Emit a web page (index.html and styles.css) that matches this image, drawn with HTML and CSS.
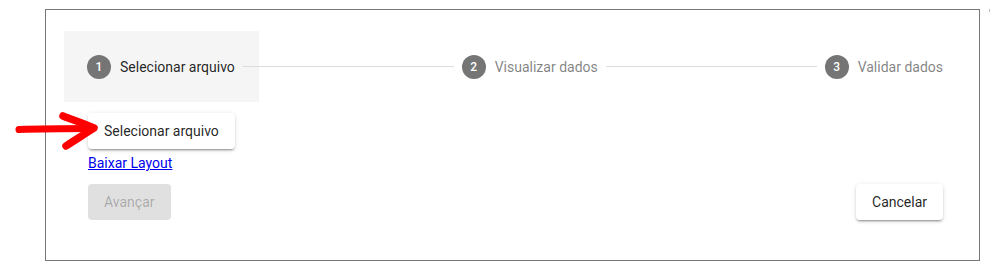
FILE: index.html
```html
<!DOCTYPE html>
<html lang="pt">
<head>
<meta charset="utf-8">
<title>Importar arquivo</title>
<link rel="stylesheet" href="styles.css">
</head>
<body>
<div class="page">
  <div class="panel">
    <div class="stepper">
      <div class="step step-active">
        <span class="step-icon">1</span>
        <span class="step-label">Selecionar arquivo</span>
      </div>
      <div class="connector connector-first"></div>
      <div class="step">
        <span class="step-icon">2</span>
        <span class="step-label">Visualizar dados</span>
      </div>
      <div class="connector"></div>
      <div class="step">
        <span class="step-icon">3</span>
        <span class="step-label">Validar dados</span>
      </div>
    </div>
    <div class="content">
      <div class="select-wrap">
        <button class="btn btn-raised">Selecionar arquivo</button>
        <svg class="arrow" width="90" height="46" viewBox="0 0 90 46">
          <path d="M4 22.5 C 30 21.5, 58 21.5, 78 21.5" stroke="#ff0000" stroke-width="7" fill="none" stroke-linecap="round"/>
          <path d="M48 9 C 58 13, 70 17, 79 21 C 70 27, 60 33, 51 39" stroke="#ff0000" stroke-width="7.5" fill="none" stroke-linecap="round" stroke-linejoin="round"/>
        </svg>
      </div>
      <a class="link" href="#">Baixar Layout</a>
      <div class="actions">
        <button class="btn btn-disabled" disabled>Avançar</button>
        <button class="btn btn-raised">Cancelar</button>
      </div>
    </div>
  </div>
  <span class="tick"></span>
</div>
</body>
</html>
```
FILE: styles.css
```css
html, body {
  margin: 0;
  padding: 0;
  background: #ffffff;
}
body {
  font-family: Roboto, "Liberation Sans", Arial, sans-serif;
  font-size: 14px;
}
.page {
  display: flex;
  align-items: flex-start;
  padding: 9px 0 0 45px;
}
.panel {
  width: 935px;
  box-sizing: border-box;
  border: 1px solid #777777;
  padding: 21px 28px 40px 18px;
}
.stepper {
  display: flex;
  align-items: center;
  height: 71px;
}
.step {
  display: flex;
  align-items: center;
  padding: 0 8px;
  position: relative;
  z-index: 1;
}
.step-active {
  background: #f5f5f5;
  padding: 24px 24px 23px 23px;
  z-index: 0;
}
.step-icon {
  width: 24px;
  height: 24px;
  border-radius: 50%;
  background: #757575;
  color: #ffffff;
  font-size: 12px;
  font-weight: 500;
  line-height: 24px;
  text-align: center;
  margin-right: 9px;
  flex: none;
}
.step-label {
  color: rgba(0, 0, 0, 0.5);
  line-height: 20px;
  white-space: nowrap;
}
.step-active .step-label {
  color: rgba(0, 0, 0, 0.87);
}
.connector {
  flex: 1;
  border-top: 1px solid #dcdcdc;
  position: relative;
  z-index: 2;
}
.connector-first {
  margin-left: -16px;
}
.content {
  display: flex;
  flex-direction: column;
  align-items: flex-start;
  padding: 11px 8px 0 24px;
}
.select-wrap {
  position: relative;
}
.arrow {
  position: absolute;
  left: -73px;
  top: -6px;
}
.btn {
  font-family: Roboto, "Liberation Sans", Arial, sans-serif;
  font-size: 14px;
  height: 36px;
  padding: 0 16px;
  border: none;
  border-radius: 4px;
  line-height: 36px;
  cursor: pointer;
}
.btn-raised {
  background: #ffffff;
  color: rgba(0, 0, 0, 0.87);
  box-shadow: 0px 3px 1px -2px rgba(0,0,0,0.2), 0px 2px 2px 0px rgba(0,0,0,0.14), 0px 1px 5px 0px rgba(0,0,0,0.12);
}
.btn-disabled {
  background: #e0e0e0;
  color: rgba(0, 0, 0, 0.26);
  cursor: default;
}
.link {
  margin-top: 4px;
  line-height: 20px;
  color: #0000ee;
  text-decoration: underline;
}
.actions {
  margin-top: 11px;
  align-self: stretch;
  display: flex;
  justify-content: space-between;
}
.tick {
  width: 1px;
  height: 3px;
  background: #bbbbbb;
  margin: 0 0 0 9px;
}
```
